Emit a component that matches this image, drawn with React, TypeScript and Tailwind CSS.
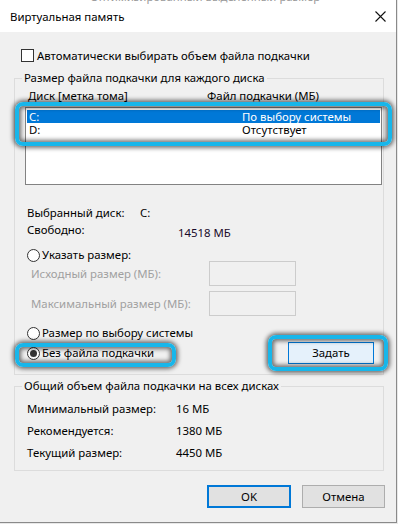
import React from 'react';

const font = { fontFamily: '"Noto Sans", "Liberation Sans", sans-serif' };

function Radio({ checked }: { checked?: boolean }) {
  return (
    <span className="w-[13px] h-[13px] rounded-full border border-[#333333] bg-white flex items-center justify-center shrink-0">
      {checked && <span className="w-[7px] h-[7px] rounded-full bg-[#333333]" />}
    </span>
  );
}

function Mark({ className }: { className: string }) {
  // cyan highlight frames drawn over the dialog
  return (
    <div
      className={`absolute rounded-[8px] border-[4px] border-[#17b6ea] shadow-[0_0_4px_2px_rgba(0,0,0,0.55),inset_0_0_4px_2px_rgba(0,0,0,0.55)] pointer-events-none ${className}`}
    />
  );
}

export default function App() {
  return (
    <div className="w-[398px] h-[524px] bg-[#e8e8e8] overflow-hidden text-[11.4px] leading-[16px] text-black" style={font}>
      <div className="relative w-[397px] h-[523px] border-r border-b border-[#8a8a8a] bg-[#f0f0f0]">
        {/* parent window text peeking above */}
        <div className="h-[4px] overflow-hidden bg-white">
          <div className="ml-[90px] -mt-[11px] text-[#9a9a9a]">Оптимизированный выделенный размер</div>
        </div>

        {/* title bar */}
        <div className="h-[28px] bg-white flex items-center justify-between pl-[10px] pr-[10px]">
          <span className="-mt-[2px]">Виртуальная память</span>
          <svg width="11" height="11" viewBox="0 0 11 11" className="-mt-[4px]">
            <path d="M0.5 0.5 L10.5 10.5 M10.5 0.5 L0.5 10.5" stroke="#111" strokeWidth="1.1" />
          </svg>
        </div>

        {/* auto checkbox */}
        <div className="mt-[17px] ml-[21px] h-[13px] flex items-center gap-[3px]">
          <span className="w-[13px] h-[13px] border border-[#333333] bg-white shrink-0" />
          <span>Автоматически выбирать объем файла подкачки</span>
        </div>

        {/* per-disk group */}
        <fieldset className="mt-[8px] ml-[14px] w-[370px] border border-[#dcdcdc] pb-[10px]">
          <legend className="ml-[7px] px-[2px]">Размер файла подкачки для каждого диска</legend>

          <div className="mt-[2px] h-[16px] flex">
            <span className="pl-[13px] w-[192px]">Диск [метка тома]</span>
            <span>Файл подкачки (МБ)</span>
          </div>

          <div className="mt-[3px] ml-[10px] w-[357px] h-[78px] border border-[#828282] bg-white px-[1px] pt-[2px]">
            <div className="h-[13px] leading-[13px] bg-[#0078d7] text-white flex">
              <span className="pl-[2px] w-[215px]">C:</span>
              <span>По выбору системы</span>
            </div>
            <div className="h-[13px] leading-[13px] flex">
              <span className="pl-[2px] w-[215px]">D:</span>
              <span>Отсутствует</span>
            </div>
          </div>

          <div className="mt-[20px] pl-[12px] h-[16px] flex">
            <span className="w-[113px]">Выбранный диск:</span>
            <span>C:</span>
          </div>
          <div className="mt-[1px] pl-[12px] h-[16px] flex">
            <span className="w-[151px]">Свободно:</span>
            <span className="mt-[3px] text-[#1a0a2a]">14518 МБ</span>
          </div>

          <div className="mt-[10px] pl-[12px] h-[14px] flex items-center gap-[2px]">
            <Radio />
            <span>Указать размер:</span>
          </div>

          <div className="-mt-[1px] h-[25px] flex items-center">
            <span className="pl-[16px] w-[194px] text-[#a0a0a0]">Исходный размер (МБ):</span>
            <span className="w-[87px] h-[25px] border border-[#cccccc] bg-[#f0f0f0]" />
          </div>
          <div className="mt-[5px] h-[25px] flex items-center">
            <span className="pl-[16px] w-[194px] text-[#a0a0a0]">Максимальный размер (МБ):</span>
            <span className="w-[87px] h-[25px] border border-[#cccccc] bg-[#f0f0f0]" />
          </div>

          <div className="mt-[10px] pl-[12px] h-[14px] flex items-center gap-[2px]">
            <Radio />
            <span>Размер по выбору системы</span>
          </div>

          <div className="mt-[2px] h-[22px] flex items-center">
            <div className="pl-[12px] w-[273px] flex items-center gap-[2px]">
              <Radio checked />
              <span>Без файла подкачки</span>
            </div>
            <button className="w-[86px] h-[22px] border border-[#0078d7] bg-[#e5f1fb] flex items-center justify-center">
              Задать
            </button>
          </div>
        </fieldset>

        {/* totals group */}
        <fieldset className="mt-[3px] ml-[14px] w-[370px] border border-[#dcdcdc] pb-[9px]">
          <legend className="ml-[7px] px-[2px]">Общий объем файла подкачки на всех дисках</legend>
          <div className="mt-[7px] flex flex-col gap-[6px] pl-[12px]">
            {[
              ['Минимальный размер:', '16 МБ'],
              ['Рекомендуется:', '1380 МБ'],
              ['Текущий размер:', '4450 МБ'],
            ].map(([label, value]) => (
              <div key={label} className="h-[16px] flex">
                <span className="w-[149px]">{label}</span>
                <span>{value}</span>
              </div>
            ))}
          </div>
        </fieldset>

        {/* dialog buttons */}
        <div className="mt-[14px] pr-[11px] flex justify-end gap-[11px]">
          <button className="w-[84px] h-[23px] border-2 border-[#0078d7] bg-[#e1e1e1] flex items-center justify-center">
            OK
          </button>
          <button className="w-[83px] h-[23px] border border-[#adadad] bg-[#e1e1e1] flex items-center justify-center">
            Отмена
          </button>
        </div>

        <Mark className="left-[15px] top-[102px] w-[377px] h-[44px]" />
        <Mark className="left-[15px] top-[343px] w-[161px] h-[24px]" />
        <Mark className="left-[268px] top-[335px] w-[120px] h-[36px]" />
      </div>
    </div>
  );
}
